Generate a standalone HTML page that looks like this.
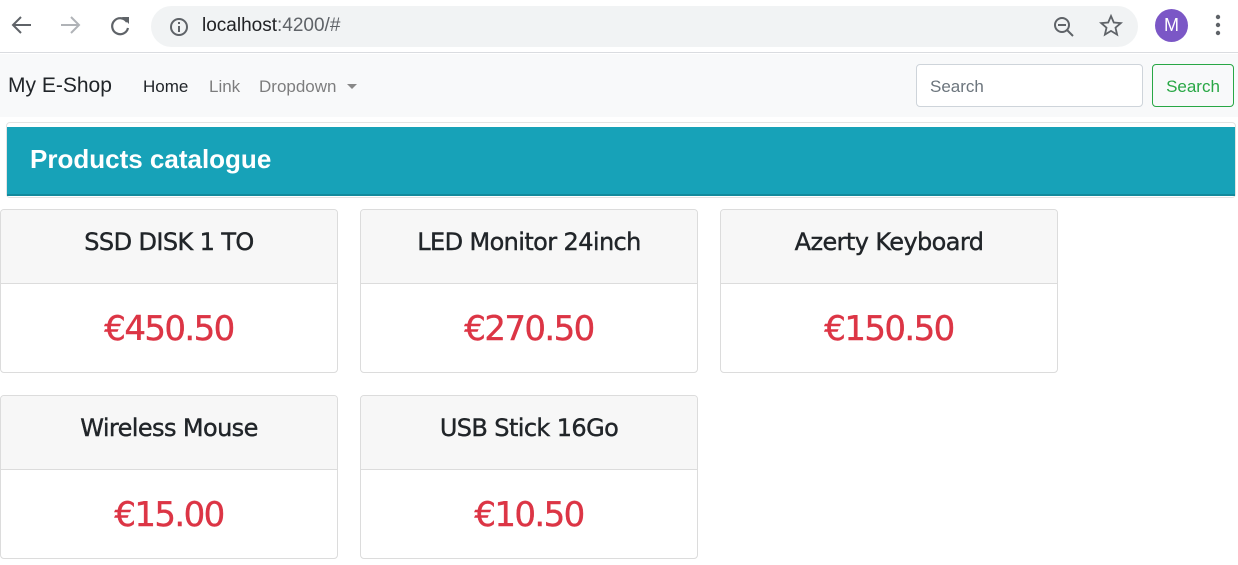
<!DOCTYPE html>
<html><head><meta charset="utf-8"><style>
*{box-sizing:border-box;margin:0;padding:0}
body{width:1238px;height:565px;overflow:hidden;background:#fff;font-family:"Liberation Sans",sans-serif;position:relative}
.abs{position:absolute}
.chrome{left:0;top:0;width:1238px;height:53px;background:#fff;border-bottom:1px solid #dadce0}
.omni{left:151px;top:6px;width:987px;height:41px;background:#f1f3f4;border-radius:21px}
.url{left:202px;top:15px;font-size:19px;color:#202124}
.url span{color:#5f6368}
.nav{left:0;top:54px;width:1238px;height:63px;background:#f8f9fa}
.brand{left:8px;top:74px;font-size:21px;color:#212529}
.nl{top:77px;font-size:17px;color:rgba(0,0,0,.5)}
.inp{left:916px;top:64px;width:227px;height:43px;border:1px solid #ced4da;border-radius:4px;background:#fff;font-size:17px;color:#6c757d;padding:12px 13px}
.btn{left:1152px;top:64px;width:82px;height:43px;border:1px solid #28a745;border-radius:4px;font-size:17px;color:#28a745;padding:12px 0;text-align:center}
.outer{left:6px;top:122px;width:1230px;height:76px;border:1px solid #e3e3e3;border-radius:4px}
.teal{left:7px;top:127px;width:1228px;height:69px;background:#17a2b8;border-bottom:2px solid #138a9c;color:#fff;font-weight:bold;font-size:26px;padding:17px 23px}
.card{width:338px;height:164px;border:1px solid #dcdcdc;border-radius:4px;overflow:hidden}
.ch{height:74px;background:#f7f7f7;border-bottom:1px solid #dcdcdc;text-align:center;font-size:24px;color:#212529;padding-top:18px;font-family:"DejaVu Sans","Liberation Sans",sans-serif;letter-spacing:-0.6px;-webkit-text-stroke:0.4px #212529}
.cb{text-align:center;font-size:34px;color:#dc3545;padding-top:25px;font-family:"DejaVu Sans","Liberation Sans",sans-serif;letter-spacing:-1.6px;-webkit-text-stroke:0.4px #dc3545}
</style></head><body>
<div class="abs chrome"></div>
<svg class="abs" style="left:0;top:0" width="150" height="53">
<path d="M31 25H13M21 17l-8 8 8 8" stroke="#5f6368" stroke-width="2" fill="none"/>
<path d="M61 25h18M71 17l8 8-8 8" stroke="#b0b3b7" stroke-width="2" fill="none"/>
<path d="M127 22a8 8 0 1 0 1 6" stroke="#5f6368" stroke-width="2.2" fill="none"/><path d="M122 17h7v7z" fill="#5f6368"/>
</svg>
<div class="abs omni"></div>
<svg class="abs" style="left:168px;top:16px" width="22" height="22"><circle cx="11" cy="11" r="8" stroke="#5f6368" stroke-width="2" fill="none"/><rect x="10" y="10" width="2" height="6" fill="#5f6368"/><rect x="10" y="6" width="2" height="2" fill="#5f6368"/></svg>
<div class="abs url">localhost<span>:4200/#</span></div>
<svg class="abs" style="left:1050px;top:13px" width="80" height="28">
<circle cx="12" cy="12" r="7" stroke="#5f6368" stroke-width="2" fill="none"/><path d="M8 12h8M17 17l6 6" stroke="#5f6368" stroke-width="2"/>
<path d="M61 3l2.8 6.5 7 .6-5.3 4.6 1.6 6.9-6.1-3.7-6.1 3.7 1.6-6.9-5.3-4.6 7-.6z" stroke="#5f6368" stroke-width="1.8" fill="none"/>
</svg>
<div class="abs" style="left:1155px;top:9px;width:33px;height:33px;border-radius:50%;background:#7b57c6;color:#fff;font-size:18px;text-align:center;line-height:33px">M</div>
<svg class="abs" style="left:1212px;top:14px" width="12" height="24"><circle cx="6" cy="3" r="2.2" fill="#5f6368"/><circle cx="6" cy="11" r="2.2" fill="#5f6368"/><circle cx="6" cy="19" r="2.2" fill="#5f6368"/></svg>
<div class="abs nav"></div>
<div class="abs brand">My E-Shop</div>
<div class="abs nl" style="left:143px;color:#212529">Home</div>
<div class="abs nl" style="left:209px">Link</div>
<div class="abs nl" style="left:259px">Dropdown</div>
<div class="abs" style="left:347px;top:84px;border-left:5px solid transparent;border-right:5px solid transparent;border-top:5px solid #888"></div>
<div class="abs inp">Search</div>
<div class="abs btn">Search</div>
<div class="abs outer"></div>
<div class="abs teal">Products catalogue</div>
<div class="abs card" style="left:0;top:209px"><div class="ch">SSD DISK 1 TO</div><div class="cb">€450.50</div></div>
<div class="abs card" style="left:360px;top:209px"><div class="ch">LED Monitor 24inch</div><div class="cb">€270.50</div></div>
<div class="abs card" style="left:720px;top:209px"><div class="ch">Azerty Keyboard</div><div class="cb">€150.50</div></div>
<div class="abs card" style="left:0;top:395px"><div class="ch">Wireless Mouse</div><div class="cb">€15.00</div></div>
<div class="abs card" style="left:360px;top:395px"><div class="ch">USB Stick 16Go</div><div class="cb">€10.50</div></div>
</body></html>
